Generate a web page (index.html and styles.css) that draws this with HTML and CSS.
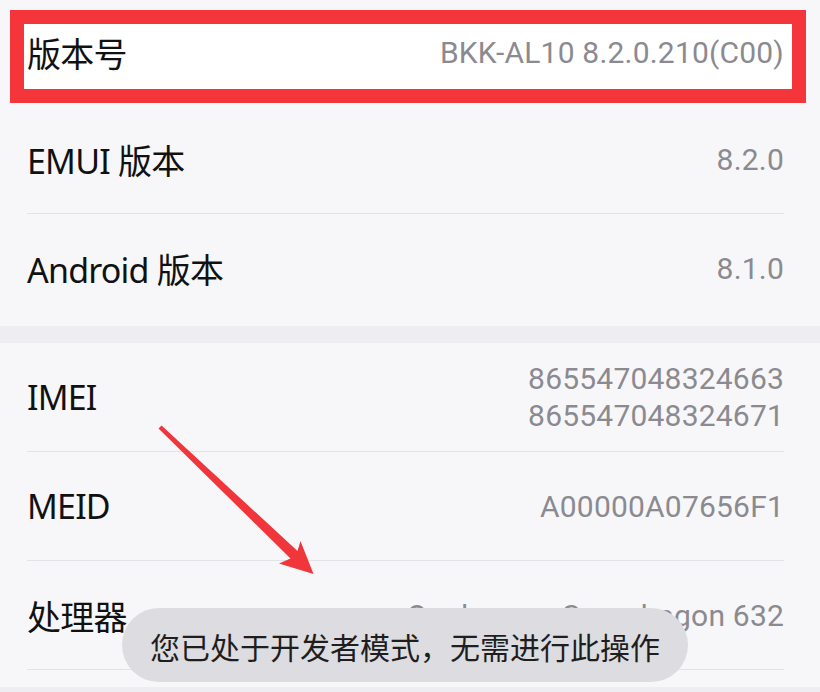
FILE: index.html
```html
<!DOCTYPE html>
<html lang="zh-CN">
<head>
<meta charset="utf-8">
<title>关于手机</title>
<link rel="stylesheet" href="styles.css">
</head>
<body>
<div class="screen">
  <div class="highlight"></div>
  <div class="group">
    <div class="row row-first">
      <span class="label">版本号</span>
      <span class="value">BKK-AL10 8.2.0.210(C00)</span>
    </div>
    <div class="row">
      <span class="label">EMUI 版本</span>
      <span class="value">8.2.0</span>
    </div>
    <div class="row row-last">
      <span class="label">Android 版本</span>
      <span class="value">8.1.0</span>
    </div>
  </div>
  <div class="gap"></div>
  <div class="group">
    <div class="row row-tall">
      <span class="label">IMEI</span>
      <span class="value value-multi"><span>865547048324663</span><span>865547048324671</span></span>
    </div>
    <div class="row row-tall">
      <span class="label">MEID</span>
      <span class="value">A00000A07656F1</span>
    </div>
    <div class="row row-tall">
      <span class="label">处理器</span>
      <span class="value">Qualcomm Snapdragon 632</span>
    </div>
  </div>
  <div class="gap gap-bottom"></div>

  <svg class="arrow" width="820" height="692" viewBox="0 0 820 692" xmlns="http://www.w3.org/2000/svg">
    <polygon points="161.5,425.5 297.5,551 300.5,541 313.5,574 279,563.5 290.5,558.5 158.5,428.5" fill="#f0363b"/>
  </svg>

  <div class="toast">您已处于开发者模式，无需进行此操作</div>
</div>
</body>
</html>
```

FILE: styles.css
```css
html, body {
  margin: 0;
  padding: 0;
}

body {
  background: #f7f7f9;
}

.screen {
  position: relative;
  width: 820px;
  height: 692px;
  overflow: hidden;
  background: #f7f7f9;
  font-family: "Noto Sans", "Noto Sans CJK SC", sans-serif;
}

.highlight {
  position: absolute;
  left: 10px;
  top: 10px;
  width: 796px;
  height: 93px;
  box-sizing: border-box;
  border: 14px solid #f4363b;
  background: #ffffff;
  z-index: 0;
}

.group {
  position: relative;
  z-index: 1;
  display: flex;
  flex-direction: column;
}

.row {
  display: flex;
  align-items: center;
  justify-content: space-between;
  box-sizing: border-box;
  height: 108px;
  margin: 0 36px 0 27px;
  border-bottom: 1px solid #e3e2e6;
}

.row-first {
  height: 106px;
  border-bottom: none;
  padding-bottom: 2px;
}

.row-last {
  height: 112px;
  border-bottom: none;
  padding-bottom: 4px;
}

.row-tall {
  height: 109px;
}

.label {
  font-size: 34px;
  color: #111111;
  letter-spacing: -0.8px;
}

.value {
  font-family: "Roboto", "Noto Sans CJK SC", sans-serif;
  font-size: 30px;
  letter-spacing: 0.2px;
  color: #8b8a90;
  text-align: right;
}

.value-multi {
  display: flex;
  flex-direction: column;
  align-items: flex-end;
  line-height: 37px;
  padding-bottom: 1px;
}

.gap {
  height: 17px;
  background: #eeedf1;
}

.gap-bottom {
  margin-top: 17px;
}

.arrow {
  position: absolute;
  left: 0;
  top: 0;
  z-index: 2;
  pointer-events: none;
}

.toast {
  position: absolute;
  left: 122px;
  top: 608px;
  width: 566px;
  height: 74px;
  border-radius: 37px;
  background: #dddce0;
  z-index: 3;
  display: flex;
  align-items: center;
  justify-content: center;
  font-family: "Noto Sans CJK SC", sans-serif;
  font-size: 30px;
  color: #1e1e1e;
  padding-top: 2px;
  box-sizing: border-box;
}
```
